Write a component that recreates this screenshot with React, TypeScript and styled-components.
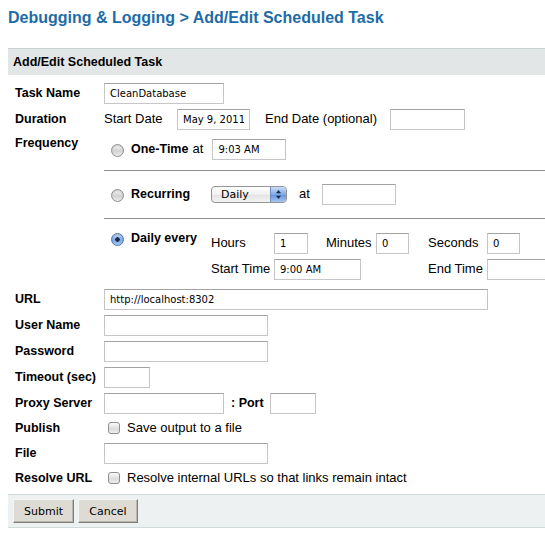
import React from "react";
import styled, { createGlobalStyle } from "styled-components";

const Global = createGlobalStyle`
  html, body { margin: 0; padding: 0; background: #fff; overflow: hidden; }
  body { font-family: "Liberation Sans", Arial, Helvetica, sans-serif; color: #000; }
`;

const Page = styled.div`
  padding: 8px 0 0 8px;
  width: 537px;
  overflow: hidden;
`;

const Title = styled.h1`
  margin: 0 0 20px;
  font-size: 16px;
  line-height: 20px;
  font-weight: bold;
  color: #1d6ca7;
  white-space: nowrap;
`;

const PanelHeader = styled.div`
  border-top: 1px solid #c9d3d3;
  background: #e2e6e6;
  height: 26px;
  line-height: 26px;
  padding-left: 5px;
  font-size: 12.5px;
  font-weight: bold;
`;

const Body = styled.div`
  padding: 5px 0 4px 7px;
`;

const Row = styled.div<{ $h?: number }>`
  display: grid;
  grid-template-columns: 89px minmax(0, 1fr);
  align-items: center;
  height: ${(p) => (p.$h ? `${p.$h}px` : "auto")};
`;

const Label = styled.div<{ $top?: boolean }>`
  font-size: 12.5px;
  font-weight: bold;
  line-height: 16px;
  white-space: nowrap;
  align-self: ${(p) => (p.$top ? "start" : "center")};
  padding-top: ${(p) => (p.$top ? "3px" : "0")};
`;

const Field = styled.div`
  display: flex;
  align-items: center;
  min-width: 0;
`;

const Text = styled.span<{ $w?: number; $ml?: number; $bold?: boolean }>`
  font-size: ${(p) => (p.$bold ? "12.5px" : "13px")};
  font-weight: ${(p) => (p.$bold ? "bold" : "normal")};
  line-height: 16px;
  white-space: nowrap;
  flex: none;
  width: ${(p) => (p.$w ? `${p.$w}px` : "auto")};
  margin-left: ${(p) => p.$ml ?? 0}px;
`;

const Input = styled.input<{ $w: number; $ml?: number }>`
  box-sizing: border-box;
  width: ${(p) => p.$w}px;
  height: 21px;
  margin: 0 0 0 ${(p) => p.$ml ?? 0}px;
  flex: none;
  border: 1px solid #c6c6c6;
  border-top-color: #a2a2a2;
  padding: 0 5px;
  font-family: "DejaVu Sans", Verdana, sans-serif;
  font-size: 10px;
  color: #000;
  background: #fff;
  outline: none;
`;

const Block = styled.div<{ $pt: number; $pb: number; $sep?: boolean }>`
  padding: ${(p) => p.$pt}px 0 ${(p) => p.$pb}px 7px;
  border-top: ${(p) => (p.$sep ? "1px solid #8f8f8f" : "none")};
`;

const OptionLine = styled.div`
  display: flex;
  align-items: center;
  height: 26px;
`;

const DailyBlock = styled(Block)`
  display: flex;
  align-items: flex-start;
`;

const OptionHead = styled.div`
  display: flex;
  align-items: center;
  height: 16px;
  flex: none;
`;

const Radio = styled.span<{ $checked?: boolean }>`
  box-sizing: border-box;
  width: 13px;
  height: 13px;
  margin: 3px 7px 0 0;
  flex: none;
  border-radius: 50%;
  border: 1px solid ${(p) => (p.$checked ? "#4f73a6" : "#8e8e8e")};
  background: ${(p) =>
    p.$checked
      ? "radial-gradient(circle at 50% 50%, #1d2d49 0 2px, transparent 2.5px), linear-gradient(#c8dcf6, #79a8e6 55%, #a9c8f0)"
      : "linear-gradient(#f4f4f4, #d2d2d2 55%, #ececec)"};
  box-shadow: inset 0 1px 1px rgba(0, 0, 0, 0.15);
`;

const Check = styled.span`
  box-sizing: border-box;
  width: 12px;
  height: 12px;
  margin: 0 7px 0 4px;
  flex: none;
  border-radius: 3px;
  border: 1px solid #8e8e8e;
  background: linear-gradient(#fbfbfb, #dcdcdc 60%, #efefef);
`;

const PopUp = styled.div`
  box-sizing: border-box;
  width: 76px;
  height: 17px;
  flex: none;
  display: flex;
  align-items: stretch;
  border: 1px solid #949494;
  border-radius: 4px;
  overflow: hidden;
  background: linear-gradient(#ffffff, #f0f0f0 50%, #e2e2e2 51%, #f4f4f4);
`;

const PopUpText = styled.span`
  flex: 1;
  padding-left: 9px;
  font-family: "DejaVu Sans", Verdana, sans-serif;
  font-size: 11px;
  line-height: 15px;
`;

const PopUpArrows = styled.span`
  width: 15px;
  display: flex;
  align-items: center;
  justify-content: center;
  border-left: 1px solid #6e8fc0;
  background: linear-gradient(#c9dcf7, #7eaae4 50%, #5f93dc 51%, #a7c6ef);
`;

const TimeGrid = styled.div`
  display: grid;
  grid-template-columns: 63px 52px 50px 52px 59px minmax(0, 1fr);
  grid-auto-rows: 26px;
  align-items: center;
  margin-left: 0;
`;

const Span3 = styled.div`
  grid-column: span 3;
  display: flex;
`;

const Footer = styled.div`
  display: flex;
  gap: 4px;
  padding: 4px 5px;
  background: #eef1f1;
  border-top: 1px solid #d2dbdb;
  border-bottom: 1px solid #d2dbdb;
`;

const Button = styled.button<{ $w: number }>`
  box-sizing: border-box;
  width: ${(p) => p.$w}px;
  height: 24px;
  padding: 0;
  font-family: "DejaVu Sans", Verdana, sans-serif;
  font-size: 11px;
  color: #000;
  background: #dddbd4;
  border: 1px solid;
  border-color: #f6f6f2 #7f7e79 #7f7e79 #f6f6f2;
  box-shadow: inset -1px -1px 0 #b7b5ae;
  cursor: pointer;
`;

const Arrows = () => (
  <svg width="7" height="11" viewBox="0 0 7 11">
    <path d="M3.5 1 L6 4.3 H1 Z" fill="#1a2a44" />
    <path d="M3.5 10 L6 6.7 H1 Z" fill="#1a2a44" />
  </svg>
);

export default function App() {
  return (
    <>
      <Global />
      <Page>
        <Title>Debugging &amp; Logging &gt; Add/Edit Scheduled Task</Title>
        <section>
          <PanelHeader>Add/Edit Scheduled Task</PanelHeader>
          <Body>
            <Row $h={26}>
              <Label>Task Name</Label>
              <Field>
                <Input $w={120} defaultValue="CleanDatabase" />
              </Field>
            </Row>
            <Row $h={26}>
              <Label>Duration</Label>
              <Field>
                <Text $w={73}>Start Date</Text>
                <Input $w={73} defaultValue="May 9, 2011" />
                <Text $w={125} $ml={15}>End Date (optional)</Text>
                <Input $w={75} />
              </Field>
            </Row>
            <Row>
              <Label $top>Frequency</Label>
              <div>
                <Block $pt={4} $pb={8}>
                  <OptionLine>
                    <Radio />
                    <Text $bold>One-Time</Text>
                    <Text $w={20} $ml={4}>at</Text>
                    <Input $w={74} defaultValue="9:03 AM" />
                  </OptionLine>
                </Block>
                <Block $pt={10} $pb={11} $sep>
                  <OptionLine>
                    <Radio />
                    <Text $bold $w={80}>Recurring</Text>
                    <PopUp>
                      <PopUpText>Daily</PopUpText>
                      <PopUpArrows>
                        <Arrows />
                      </PopUpArrows>
                    </PopUp>
                    <Text $w={23} $ml={12}>at</Text>
                    <Input $w={74} />
                  </OptionLine>
                </Block>
                <DailyBlock $pt={11} $pb={4} $sep>
                  <OptionHead>
                    <Radio $checked />
                    <Text $bold $w={80}>Daily every</Text>
                  </OptionHead>
                  <TimeGrid>
                    <Text>Hours</Text>
                    <div>
                      <Input $w={34} defaultValue="1" />
                    </div>
                    <Text>Minutes</Text>
                    <div>
                      <Input $w={33} defaultValue="0" />
                    </div>
                    <Text>Seconds</Text>
                    <div>
                      <Input $w={33} defaultValue="0" />
                    </div>
                    <Text>Start Time</Text>
                    <Span3>
                      <Input $w={87} defaultValue="9:00 AM" />
                    </Span3>
                    <Text>End Time</Text>
                    <div>
                      <Input $w={75} />
                    </div>
                  </TimeGrid>
                </DailyBlock>
              </div>
            </Row>
            <Row $h={26}>
              <Label>URL</Label>
              <Field>
                <Input $w={384} defaultValue="http://localhost:8302" />
              </Field>
            </Row>
            <Row $h={26}>
              <Label>User Name</Label>
              <Field>
                <Input $w={164} />
              </Field>
            </Row>
            <Row $h={26}>
              <Label>Password</Label>
              <Field>
                <Input $w={164} type="password" />
              </Field>
            </Row>
            <Row $h={26}>
              <Label>Timeout (sec)</Label>
              <Field>
                <Input $w={46} />
              </Field>
            </Row>
            <Row $h={26}>
              <Label>Proxy Server</Label>
              <Field>
                <Input $w={120} />
                <Text $bold $w={39} $ml={7}>: Port</Text>
                <Input $w={46} />
              </Field>
            </Row>
            <Row $h={24}>
              <Label>Publish</Label>
              <Field>
                <Check />
                <Text>Save output to a file</Text>
              </Field>
            </Row>
            <Row $h={26}>
              <Label>File</Label>
              <Field>
                <Input $w={164} />
              </Field>
            </Row>
            <Row $h={24}>
              <Label>Resolve URL</Label>
              <Field>
                <Check />
                <Text>Resolve internal URLs so that links remain intact</Text>
              </Field>
            </Row>
          </Body>
          <Footer>
            <Button $w={61}>Submit</Button>
            <Button $w={60}>Cancel</Button>
          </Footer>
        </section>
      </Page>
    </>
  );
}
